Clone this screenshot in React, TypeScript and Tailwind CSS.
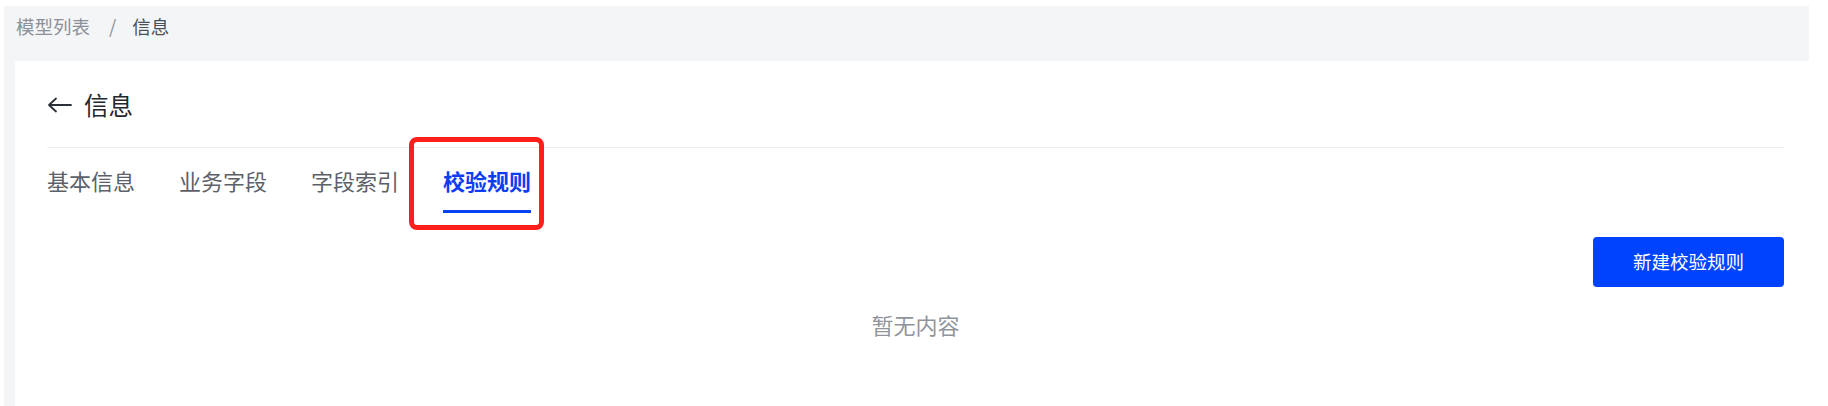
import React from "react";

const tabs = ["基本信息", "业务字段", "字段索引", "校验规则"];

export default function App() {
  return (
    <div
      className="h-[406px] w-[1828px] overflow-hidden bg-white pt-[6px] pl-[4px] pr-[19px] flex flex-col"
      style={{ fontFamily: '"Noto Sans CJK SC", "Noto Sans", sans-serif' }}
    >
      <div className="flex-1 bg-[#f4f5f7] flex flex-col">
        <div className="h-[55px] pt-[8px] pl-[12px] flex items-start text-[18.5px] leading-[24px]">
          <span className="text-[#8b9099]">模型列表</span>
          <span className="text-[#8b9099] ml-[19px] mr-[16px]">/</span>
          <span className="text-[#4a5059]">信息</span>
        </div>
        <div className="flex-1 ml-[11px] bg-white pl-[32px] pr-[25px] flex flex-col">
          <div className="pt-[28px] flex items-center gap-[12px]">
            <svg width="25" height="16" viewBox="0 0 25 16" className="shrink-0">
              <path d="M24 8H2M9 1.5L2 8l7 6.5" fill="none" stroke="#2b2f36" strokeWidth="1.8" strokeLinecap="round" strokeLinejoin="round" />
            </svg>
            <span className="h-[32px] leading-[32px] text-[24.5px] text-[#23272e]">信息</span>
          </div>
          <div className="mt-[26px] h-px bg-[#eceef1]" />
          <div className="flex gap-[44px] pt-[17px]">
            {tabs.map((t, i) => {
              const active = i === 3;
              return (
                <div key={t} className="relative flex flex-col">
                  <span
                    className={
                      active
                        ? "text-[22px] leading-[30px] font-bold text-[#0d3cf5]"
                        : "text-[22px] leading-[30px] text-[#5c6169]"
                    }
                  >
                    {t}
                  </span>
                  <div className={active ? "mt-[15px] h-[3px] bg-[#0a43f5]" : "mt-[15px] h-[3px] bg-transparent"} />
                  {active && (
                    <div className="absolute left-[-34px] top-[-28px] w-[135px] h-[93px] border-[5px] border-[#ff1f1a] rounded-[8px]" />
                  )}
                </div>
              );
            })}
          </div>
          <div className="mt-[24px] flex justify-end">
            <button className="w-[191px] h-[50px] rounded-[4px] bg-[#0043ff] text-white text-[18.5px]">
              新建校验规则
            </button>
          </div>
          <div className="mt-[22px] text-center text-[22px] leading-[30px] text-[#90959d]">暂无内容</div>
        </div>
      </div>
    </div>
  );
}
